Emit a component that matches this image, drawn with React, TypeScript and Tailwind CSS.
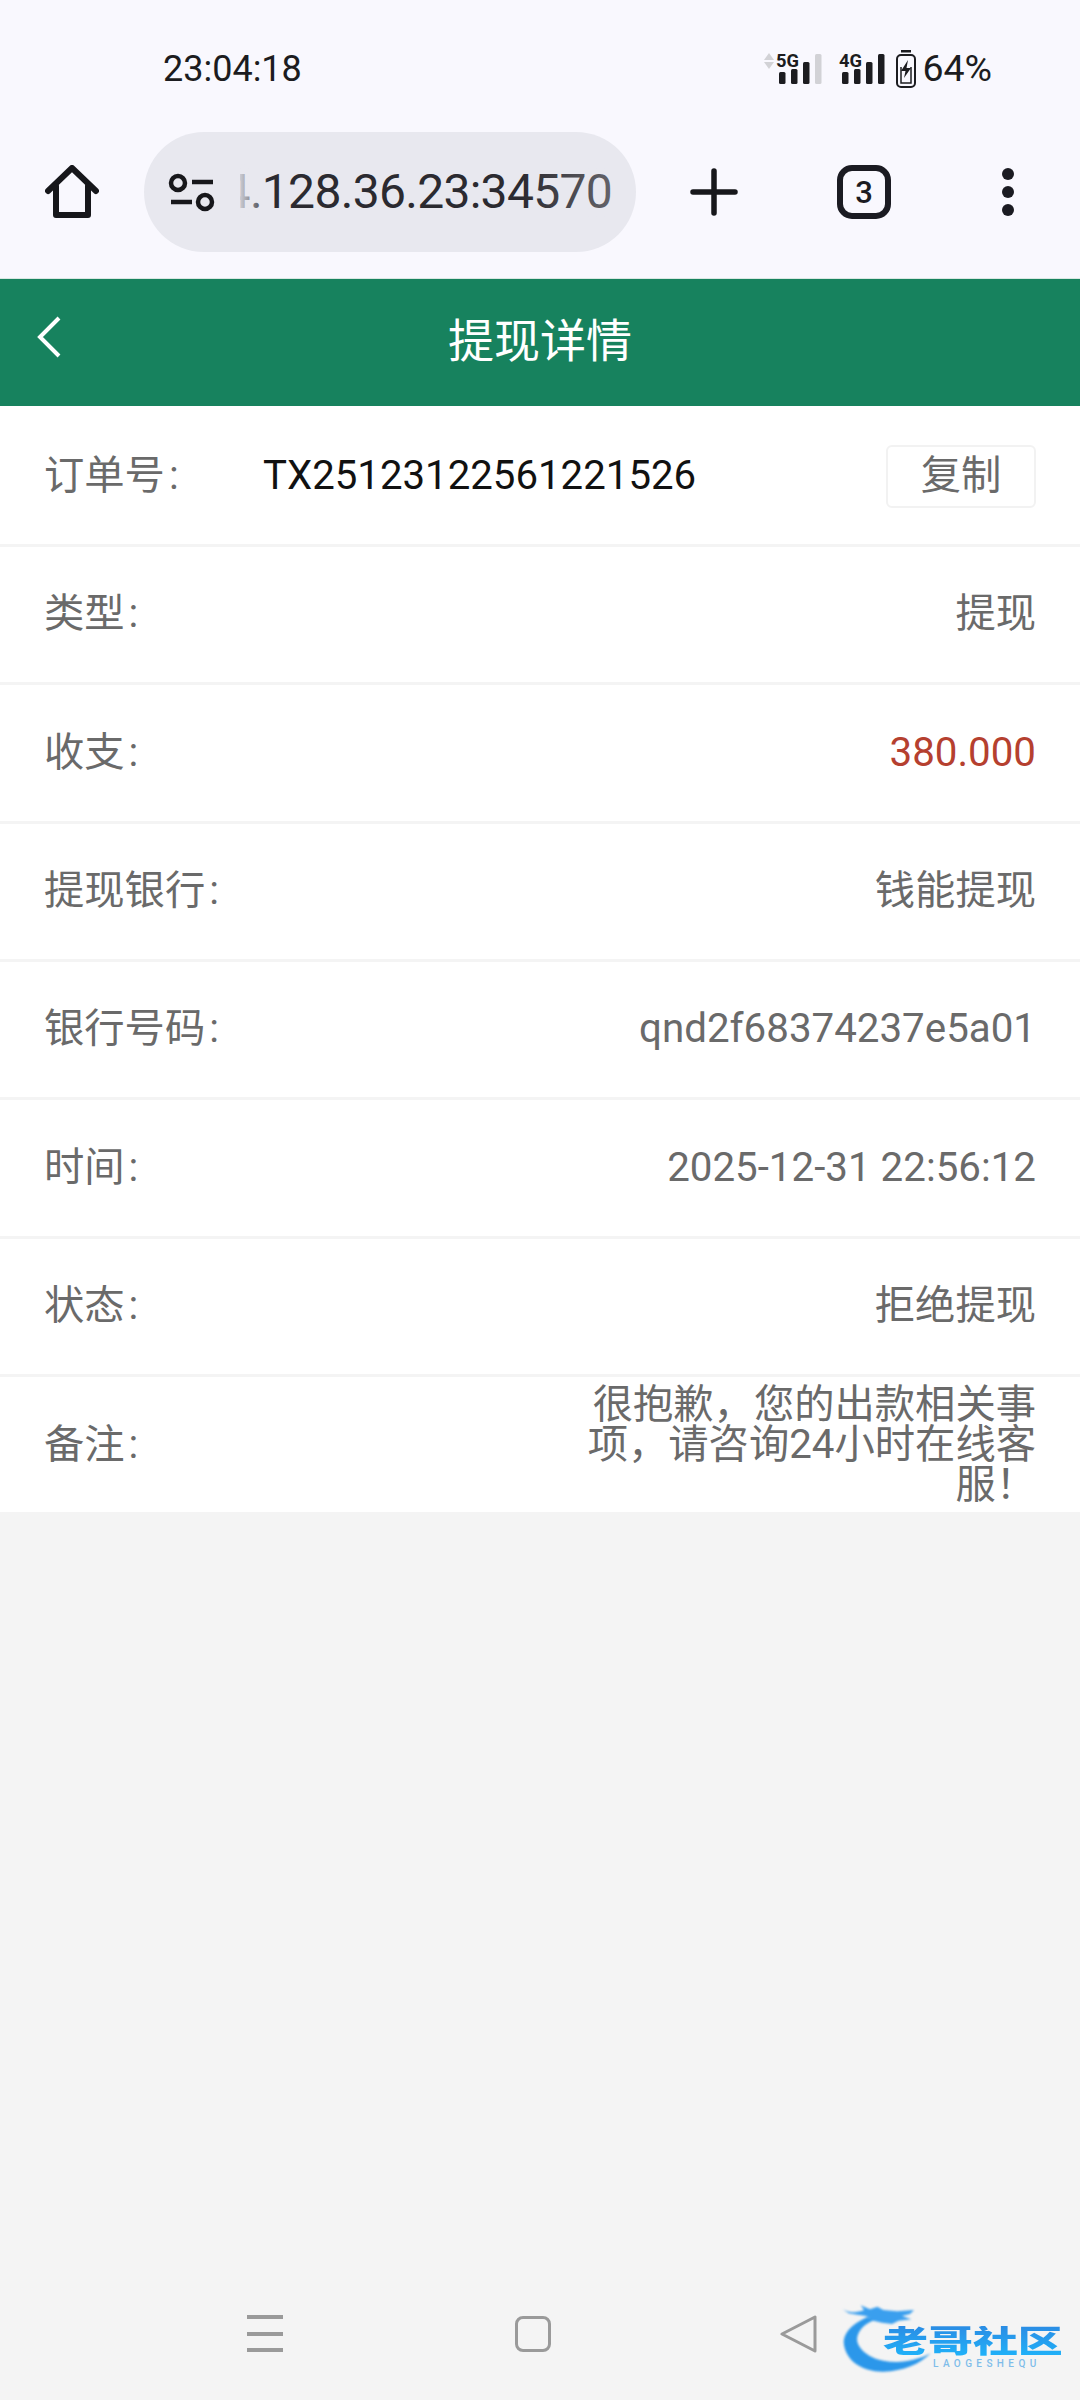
import React from 'react';

const FONT = "font-['Roboto','Noto_Sans_CJK_SC',sans-serif]";

const ROWS = [
  { label: '类型', value: '提现', color: 'text-[#6a6a6a]' },
  { label: '收支', value: '380.000', color: 'text-[#b5402f]' },
  { label: '提现银行', value: '钱能提现', color: 'text-[#6a6a6a]' },
  { label: '银行号码', value: 'qnd2f68374237e5a01', color: 'text-[#6a6a6a]' },
  { label: '时间', value: '2025-12-31 22:56:12', color: 'text-[#6a6a6a]' },
  { label: '状态', value: '拒绝提现', color: 'text-[#6a6a6a]' },
];

function Label({ text }: { text: string }) {
  return (
    <span className="text-[40.3px] text-[#6a6a6a]">
      {text}
      <span className="ml-[4px]">:</span>
    </span>
  );
}

function Signal({ label, dim }: { label: string; dim?: boolean }) {
  return (
    <svg width="52" height="36" viewBox="0 0 52 36" className="overflow-visible">
      <text x="0" y="16" fontSize="19" fontWeight="700" fill="#1c1c20" fontFamily="Roboto" textLength="23" lengthAdjust="spacingAndGlyphs">{label}</text>
      <rect x="3" y="21" width="6.5" height="12" rx="1.5" fill="#1c1c20" />
      <rect x="15" y="18" width="6.5" height="15" rx="1.5" fill="#1c1c20" />
      <rect x="27" y="11" width="6.5" height="22" rx="1.5" fill="#1c1c20" />
      <rect x="39" y="3" width="6.5" height="30" rx="1.5" fill={dim ? '#d2d2d6' : '#1c1c20'} />
    </svg>
  );
}

function StatusBar() {
  return (
    <div className="h-[132px] flex items-center justify-between pl-[163px] pr-[88px] pt-[5px]">
      <span className="text-[36px] text-[#1c1c20] leading-none">23:04:18</span>
      <div className="flex items-center">
        <svg width="14" height="36" viewBox="0 0 14 36">
          <path d="M7 2 L12 9 H2 Z" fill="#d2d2d6" />
          <path d="M7 18 L12 11 H2 Z" fill="#d2d2d6" />
        </svg>
        <Signal label="5G" dim />
        <div className="w-[11px]" />
        <Signal label="4G" />
        <svg width="20" height="38" viewBox="0 0 20 38" className="ml-[5px]">
          <rect x="5" y="0" width="10" height="2.5" fill="#1c1c20" />
          <rect x="1" y="5" width="18" height="32" rx="4" fill="none" stroke="#1c1c20" strokeWidth="2" />
          <path d="M5 17 V33 H15 V17" fill="none" stroke="#1c1c20" strokeWidth="1.5" />
          <path d="M12 10 L5 21 H9.5 L8 28 L15 18 H10.5 Z" fill="#1c1c20" />
        </svg>
        <span className="text-[37.5px] text-[#1c1c20] leading-none ml-[6px]">64%</span>
      </div>
    </div>
  );
}

function BrowserBar() {
  return (
    <div className="h-[146px] flex items-start">
      <div className="w-[144px] flex justify-center pt-[33px]">
        <svg width="54" height="54" viewBox="0 0 54 54" fill="none" stroke="#17171b" strokeWidth="6" strokeLinejoin="round" strokeLinecap="round">
          <path d="M3 26 L27 3 L51 26" />
          <path d="M11 21 V50 H43 V21" />
        </svg>
      </div>
      <div className="w-[492px] h-[120px] rounded-[60px] bg-[#e8e8ef] flex items-center pl-[24px]">
        <svg width="48" height="40" viewBox="0 0 48 40" fill="none" stroke="#17171b" strokeWidth="4.5">
          <circle cx="10" cy="11" r="7" />
          <path d="M24 10 H45" />
          <path d="M3 30 H24" />
          <circle cx="37" cy="30" r="7" />
        </svg>
        {/* url scrolled inside the pill, the start of it fades out on purpose */}
        <div className="ml-[24px] w-[372px] overflow-hidden relative flex justify-end">
          <div className="shrink-0 text-[48px] tracking-[-0.7px] leading-[60px] text-[#2b2a30] whitespace-nowrap">4.128.36.23:34570</div>
          <div className="absolute inset-y-0 left-0 w-[28px] bg-gradient-to-r from-[#e8e8ef]/85 to-transparent" />
          <div className="absolute inset-y-0 right-0 w-[90px] bg-gradient-to-r from-transparent to-[#e8e8ef]/30" />
        </div>
      </div>
      <div className="w-[156px] flex justify-center pt-[36px]">
        <svg width="48" height="48" viewBox="0 0 48 48" stroke="#17171b" strokeWidth="5.5" strokeLinecap="round">
          <path d="M24 3 V45 M3 24 H45" />
        </svg>
      </div>
      <div className="w-[144px] flex justify-center pt-[33px]">
        <div className="w-[54px] h-[54px] border-[6px] border-[#1b1b22] rounded-[15px] flex items-center justify-center text-[31px] font-medium text-[#1b1b22] leading-none">3</div>
      </div>
      <div className="flex flex-col gap-[6px] pt-[36px] ml-[66px] w-[12px]">
        <div className="w-[12px] h-[12px] rounded-full bg-[#1b1b22]" />
        <div className="w-[12px] h-[12px] rounded-full bg-[#1b1b22]" />
        <div className="w-[12px] h-[12px] rounded-full bg-[#1b1b22]" />
      </div>
    </div>
  );
}

function Logo() {
  return (
    <div className="absolute left-[820px] top-[10px] w-[260px] h-[110px]">
      <svg width="260" height="110" viewBox="0 0 780 330" className="absolute inset-0 blur-[0.8px]">
        <path d="M140 82 C92 104 66 135 72 165 C80 215 130 246 190 245 C250 244 300 222 332 190 C290 212 240 222 190 212 C140 202 106 170 112 140 C118 118 135 100 165 90 Z" fill="#2b97ea" />
        <path d="M68 58 C88 70 112 68 132 60 L122 46 L150 58 L172 50 L190 60 L232 64 L282 60 L270 72 L246 78 L274 88 L236 92 L216 102 L186 98 L160 92 L138 78 L112 74 L86 70 Z" fill="#3a9fee" />
      </svg>
      <div className="absolute left-[63px] top-[36px] origin-left scale-x-[1.45] text-[31px] leading-[32px] font-black bg-gradient-to-b from-[#2a8ce4] to-[#1eb4fa] bg-clip-text text-transparent whitespace-nowrap blur-[0.4px]">老哥社区</div>
      <div className="absolute left-[113px] top-[69px] text-[10px] leading-none font-medium text-[#7fbdea] whitespace-nowrap tracking-[4.4px]">LAOGESHEQU</div>
    </div>
  );
}

export default function App() {
  return (
    <div className={`w-[1080px] h-[2400px] flex flex-col bg-[#f4f4f4] relative overflow-hidden ${FONT}`}>
      <div className="bg-[#f9f8fe] border-b-[1px] border-[#d9e8e2]">
        <StatusBar />
        <BrowserBar />
      </div>

      <div className="h-[127px] bg-[#17825e] flex items-center justify-center pb-[4px] relative">
        <svg width="28" height="44" viewBox="0 0 28 44" fill="none" stroke="#ffffff" strokeWidth="4" className="absolute left-[35px] top-[36px]">
          <path d="M24 3 L5 22 L24 41" />
        </svg>
        <span className="text-[46px] text-white leading-none">提现详情</span>
      </div>

      <div className="bg-white flex items-center h-[141px] px-[44px] pt-[2px] border-b-[3px] border-[#f4f4f4]">
        <div className="w-[219px]"><Label text="订单号" /></div>
        <span className="flex-1 text-[40.2px] text-[#111111]">TX25123122561221526</span>
        <div className="w-[150px] h-[63px] border-[2px] border-[#f2f2f2] rounded-[6px] flex items-center justify-center text-[40.3px] text-[#6a6a6a]">复制</div>
      </div>

      {ROWS.map((row) => (
        <div key={row.label} className="bg-white flex items-center justify-between h-[138.33px] px-[44px] border-b-[3px] border-[#f4f4f4]">
          <Label text={row.label} />
          <span className={`text-[40.3px] ${row.color}`}>{row.value}</span>
        </div>
      ))}

      <div className="bg-white flex items-center justify-between h-[135px] px-[44px] pt-[1px]">
        <Label text="备注" />
        <span className="w-[452px] text-right text-[40.3px] leading-[40px] text-[#6a6a6a]">很抱歉，您的出款相关事项，请咨询24小时在线客服！</span>
      </div>

      <div className="flex-1" />

      <div className="h-[120px] relative">
        <div className="absolute left-[247px] top-[35px] w-[36px] flex flex-col gap-[12.5px]">
          <div className="h-[4px] bg-[#9a9a9a]" />
          <div className="h-[4px] bg-[#9a9a9a]" />
          <div className="h-[4px] bg-[#9a9a9a]" />
        </div>
        <div className="absolute left-[515px] top-[36px] w-[36px] h-[36px] border-[3px] border-[#9a9a9a] rounded-[8px]" />
        <svg width="38" height="40" viewBox="0 0 38 40" fill="none" stroke="#9a9a9a" strokeWidth="3" strokeLinejoin="round" className="absolute left-[780px] top-[34px]">
          <path d="M35 3 V37 L2 20 Z" />
        </svg>
        <Logo />
      </div>
    </div>
  );
}
